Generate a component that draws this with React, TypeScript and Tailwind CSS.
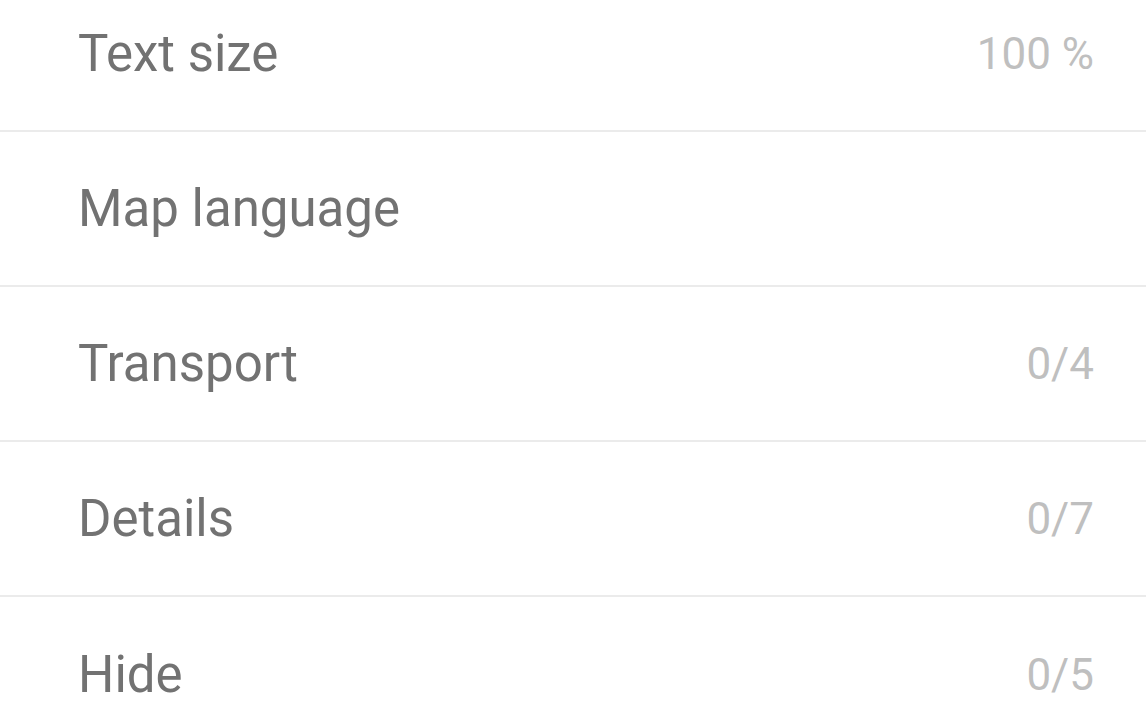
import React from "react";

const rows: { title: string; value?: string }[] = [
  { title: "Text size", value: "100 %" },
  { title: "Map language" },
  { title: "Transport", value: "0/4" },
  { title: "Details", value: "0/7" },
  { title: "Hide", value: "0/5" },
];

export default function App() {
  return (
    <div
      className="w-[1146px] h-[716px] overflow-hidden bg-white"
      style={{ fontFamily: "Roboto, 'Noto Sans', sans-serif" }}
    >
      <div className="-mt-[23px] flex flex-col">
        {rows.map((r, i) => (
          <div
            key={r.title}
            className={`flex h-[155px] shrink-0 items-center justify-between pl-[78px] pr-[52px] ${
              i < rows.length - 1 ? "border-b-2 border-[#ebebeb]" : ""
            }`}
          >
            <span className="text-[51px] leading-none text-[#727272]">{r.title}</span>
            {r.value && (
              <span className="text-[44px] leading-none text-[#bfbfbf]">{r.value}</span>
            )}
          </div>
        ))}
      </div>
    </div>
  );
}
